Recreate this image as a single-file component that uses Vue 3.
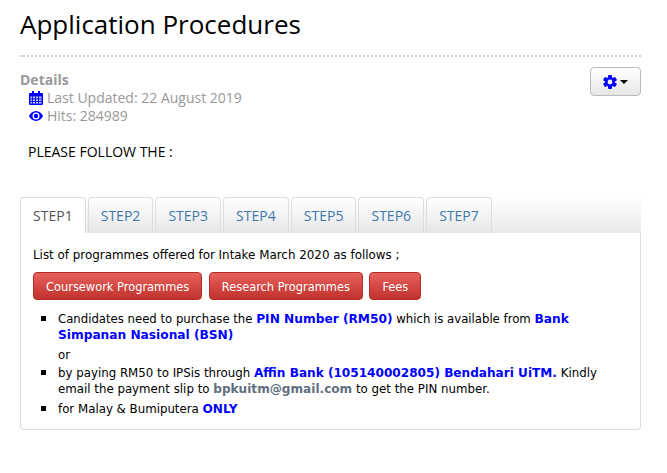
<script setup>
const steps = ['STEP1', 'STEP2', 'STEP3', 'STEP4', 'STEP5', 'STEP6', 'STEP7']
const buttons = ['Coursework Programmes', 'Research Programmes', 'Fees']
</script>

<template>
  <main class="page">
    <div class="page-header">
      <h1>Application Procedures</h1>
    </div>

    <div class="meta-row">
      <dl class="info">
        <dt>Details</dt>
        <dd>
          <svg class="ico" viewBox="0 0 14 14" width="14" height="14">
            <path fill="#0000ff" d="M1 2h2V0h2v2h4V0h2v2h2a1 1 0 0 1 1 1v10a1 1 0 0 1-1 1H1a1 1 0 0 1-1-1V3a1 1 0 0 1 1-1z" />
            <path fill="#c8c8ff" d="M1.500 5.500h11v7h-11z" />
            <path fill="#0000ff" d="M3 5.500h1v7H3zM6 5.500h1v7H6zM9 5.500h1v7H9zM1.500 7.500h11v1h-11zM1.500 10h11v1h-11z" />
          </svg>
          Last Updated: 22 August 2019
        </dd>
        <dd>
          <svg class="ico" viewBox="0 0 14 10" width="14" height="10">
            <path fill="#0000ff" fill-rule="evenodd" d="M7 0c3.200 0 5.800 2.200 7 5-1.200 2.800-3.800 5-7 5S1.200 7.800 0 5c1.200-2.800 3.800-5 7-5zM7 1.500a3.500 3.500 0 1 0 0 7 3.500 3.500 0 0 0 0-7z" />
            <circle fill="#0000ff" cx="7" cy="5" r="2.200" />
          </svg>
          Hits: 284989
        </dd>
      </dl>
      <button class="gear-btn" type="button">
        <svg viewBox="0 0 14 14" width="14" height="14">
          <g fill="#0000ff">
            <rect x="5" y="0" width="4" height="14" rx="1" />
            <rect x="5" y="0" width="4" height="14" rx="1" transform="rotate(60 7 7)" />
            <rect x="5" y="0" width="4" height="14" rx="1" transform="rotate(120 7 7)" />
            <circle cx="7" cy="7" r="5" />
          </g>
          <circle cx="7" cy="7" r="2.400" fill="#f4f4f4" />
        </svg>
        <span class="caret"></span>
      </button>
    </div>

    <p class="follow">PLEASE FOLLOW THE :</p>

    <section class="tabs">
      <ul class="tab-bar">
        <li v-for="(step, i) in steps" :key="step" class="tab" :class="{ active: i === 0 }">{{ step }}</li>
      </ul>
      <div class="tab-body">
        <p class="intro">List of programmes offered for Intake March 2020 as follows ;</p>
        <div class="btn-row">
          <button v-for="b in buttons" :key="b" class="red-btn" type="button">{{ b }}</button>
        </div>
        <ul class="notes">
          <li class="first">
            Candidates need to purchase the <b>PIN Number (RM50)</b> which is available from <b>Bank Simpanan Nasional (BSN)</b>
            <p class="or">or</p>
          </li>
          <li>
            by paying RM50 to IPSis through <b>Affin Bank (105140002805) Bendahari UiTM.</b> Kindly email the payment slip to <b class="mail">bpkuitm@gmail.com</b> to get the PIN number.
          </li>
          <li class="last">for Malay &amp; Bumiputera <b>ONLY</b></li>
        </ul>
      </div>
    </section>
  </main>
</template>

<style>
html, body {
  margin: 0;
  background: #fff;
}
</style>

<style scoped>
.page {
  width: 621px;
  margin-left: 20px;
  font-family: "Open Sans", sans-serif;
  height: 473px;
  overflow: hidden;
}

.page-header {
  height: 55px;
  border-bottom: 2px dotted #ccc;
  margin-bottom: 14px;
}

h1 {
  margin: 0;
  padding-top: 7px;
  font-size: 26px;
  line-height: 35px;
  font-weight: 400;
  color: #000;
}

.meta-row {
  display: flex;
  justify-content: space-between;
  align-items: flex-start;
}

.info {
  margin: 0;
  font-size: 14px;
  line-height: 18px;
  color: #999;
}

.info dt {
  font-weight: 700;
}

.info dd {
  margin: 0 0 0 9px;
  display: flex;
  align-items: center;
  gap: 4px;
}

.gear-btn {
  width: 51px;
  height: 29px;
  margin-top: -4px;
  padding: 0;
  border: 1px solid #bbb;
  border-radius: 4px;
  background: linear-gradient(#fff, #e6e6e6);
  display: flex;
  align-items: center;
  justify-content: center;
  gap: 3px;
}

.caret {
  border-top: 4px solid #000;
  border-left: 4px solid transparent;
  border-right: 4px solid transparent;
}

.follow {
  margin: 18px 0 36px 8px;
  font-size: 14px;
  line-height: 18px;
  color: #000;
}

.tabs {
  width: 621px;
}

.tab-bar {
  list-style: none;
  margin: 0;
  padding: 0;
  display: flex;
  gap: 2px;
  height: 36px;
  background: linear-gradient(#fff, #e9e9e9);
}

.tab {
  width: 65.700px;
  box-sizing: border-box;
  height: 36px;
  border: 1px solid #ddd;
  border-bottom: none;
  border-radius: 4px 4px 0 0;
  background: linear-gradient(#fff, #e6e6e6);
  color: #3f78b0;
  font-size: 14px;
  line-height: 35px;
  text-align: center;
}

.tab.active {
  background: #fff;
  color: #555;
}

.tab-body {
  box-sizing: border-box;
  height: 197px;
  border: 1px solid #ddd;
  border-top: none;
  border-radius: 0 0 4px 4px;
  padding: 14px 12px;
  font-family: "DejaVu Sans", sans-serif;
  font-size: 11.800px;
  color: #000;
}

.intro {
  margin: 0 0 8px;
  font-size: 11.900px;
  line-height: 17px;
}

.btn-row {
  display: flex;
  gap: 6.500px;
  margin-bottom: 11px;
}

.red-btn {
  height: 28px;
  padding: 0 12px;
  border: 1px solid #b52b27;
  border-radius: 4px;
  background: linear-gradient(#e8605c, #c0322d);
  color: #fff;
  font-family: "DejaVu Sans Condensed", "DejaVu Sans", sans-serif;
  font-size: 12.700px;
}

.notes {
  list-style: none;
  margin: 0;
  padding-left: 25px;
  line-height: 16px;
}

.notes li {
  position: relative;
  margin-bottom: 3px;
}

.notes li::before {
  content: "";
  position: absolute;
  left: -17px;
  top: 5px;
  width: 5px;
  height: 5px;
  background: #000;
}

.notes li.first {
  font-size: 11.700px;
}

.notes li.last {
  margin-top: 4px;
}

.notes b {
  color: #0000ff;
  font-size: 12.100px;
}

.notes li.first b {
  font-size: 12.200px;
}

.notes b.mail {
  color: #5f6f7f;
}

.or {
  margin: 4px 0 -1px;
}
</style>
